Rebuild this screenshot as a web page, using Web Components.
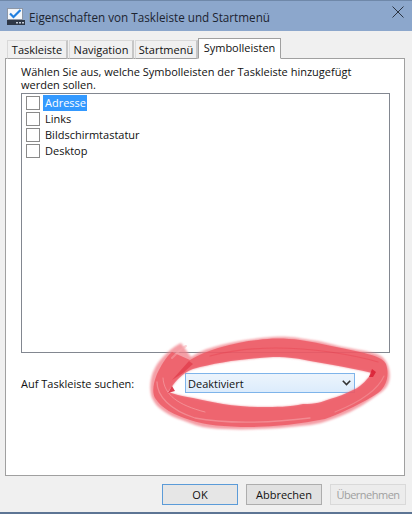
<!DOCTYPE html>
<html lang="de">
<head>
<meta charset="utf-8">
<title>Eigenschaften von Taskleiste und Startmenü</title>
<style>
  html, body { margin: 0; padding: 0; background: #f0f0f0; }
  body { font: 11px "Open Sans", "Noto Sans", sans-serif; color: #111; }
</style>
</head>
<body>
<win-dialog>
  <title-bar slot="title">Eigenschaften von Taskleiste und Startmenü</title-bar>
  <tab-strip slot="tabs">
    <tab-item style="--w:61px">Taskleiste</tab-item>
    <tab-item style="--w:65px">Navigation</tab-item>
    <tab-item style="--w:63px">Startmenü</tab-item>
    <tab-item active style="--w:83px">Symbolleisten</tab-item>
  </tab-strip>
  <tab-panel slot="panel">
    <span slot="intro">Wählen Sie aus, welche Symbolleisten der Taskleiste hinzugefügt werden sollen.</span>
    <check-list slot="list">
      <check-item selected>Adresse</check-item>
      <check-item>Links</check-item>
      <check-item>Bildschirmtastatur</check-item>
      <check-item>Desktop</check-item>
    </check-list>
    <span slot="label">Auf Taskleiste suchen:</span>
    <combo-box slot="combo">Deaktiviert</combo-box>
  </tab-panel>
  <win-button slot="buttons" focused>OK</win-button>
  <win-button slot="buttons">Abbrechen</win-button>
  <win-button slot="buttons" disabled>Übernehmen</win-button>
  <ink-ring slot="overlay"></ink-ring>
</win-dialog>

<script>
class WinDialog extends HTMLElement {
  constructor() {
    super();
    this.attachShadow({ mode: 'open' });
    this.shadowRoot.innerHTML = `
      <style>
        :host {
          display: flex;
          flex-direction: column;
          position: relative;
          width: 412px;
          height: 514px;
          box-sizing: border-box;
          background: #f0f0f0;
          border-bottom: 2px solid #5d7594;
          overflow: hidden;
        }
        .body {
          flex: 1;
          display: flex;
          flex-direction: column;
          padding: 7px 6px 0 5px;
        }
        .buttons {
          display: flex;
          justify-content: flex-end;
          gap: 8px;
          margin-top: 8px;
        }
      </style>
      <slot name="title"></slot>
      <div class="body">
        <slot name="tabs"></slot>
        <slot name="panel"></slot>
        <div class="buttons"><slot name="buttons"></slot></div>
      </div>
      <slot name="overlay"></slot>
    `;
  }
}

class TitleBar extends HTMLElement {
  constructor() {
    super();
    this.attachShadow({ mode: 'open' });
    this.shadowRoot.innerHTML = `
      <style>
        :host {
          display: flex;
          align-items: center;
          height: 31px;
          box-sizing: border-box;
          padding: 1px 8px 0 7px;
          background: #8ca7cc;
          border-top: 1px solid #6f88a9;
          color: #1c2430;
          font-size: 11.7px;
        }
        .icon { flex: none; margin-right: 4px; }
        .text { flex: 1; white-space: nowrap; }
        .close { flex: none; align-self: flex-start; margin-top: 4px; }
      </style>
      <svg class="icon" width="18" height="17" viewBox="0 0 18 17">
        <rect x="0.5" y="0.5" width="15" height="11" fill="#f4f7fb" stroke="#8d97a6"/>
        <path d="M3 5.5 L6.5 9 L13.5 2" fill="none" stroke="#1f7fe0" stroke-width="2.2"/>
        <rect x="0" y="12" width="18" height="5" fill="#2e3746"/>
        <rect x="9" y="14" width="2" height="1.5" fill="#c4cbd6"/>
        <rect x="12" y="14" width="2" height="1.5" fill="#c4cbd6"/>
        <rect x="15" y="14" width="2" height="1.5" fill="#c4cbd6"/>
      </svg>
      <span class="text"><slot></slot></span>
      <svg class="close" width="12" height="12" viewBox="0 0 12 12">
        <path d="M0.5 0.5 L11.5 11.5 M11.5 0.5 L0.5 11.5" stroke="#2b3442" stroke-width="1" fill="none"/>
      </svg>
    `;
  }
}

class TabStrip extends HTMLElement {
  constructor() {
    super();
    this.attachShadow({ mode: 'open' });
    this.shadowRoot.innerHTML = `
      <style>
        :host {
          display: flex;
          align-items: flex-end;
          height: 21px;
          padding-left: 2px;
          position: relative;
          z-index: 1;
          margin-bottom: -1px;
        }
      </style>
      <slot></slot>
    `;
  }
}

class TabItem extends HTMLElement {
  constructor() {
    super();
    this.attachShadow({ mode: 'open' });
    this.shadowRoot.innerHTML = `
      <style>
        :host {
          display: block;
          box-sizing: border-box;
          width: var(--w);
          height: 19px;
          line-height: 18px;
          text-align: center;
          margin-right: 1px;
          background: #f0f0f0;
          border: 1px solid #d9d9d9;
          border-right: 2px solid #c6c6c6;
          border-bottom: 1px solid #a0a0a0;
          white-space: nowrap;
        }
        :host([active]) {
          height: 21px;
          line-height: 17px;
          background: #fff;
          border: 1px solid #a0a0a0;
          border-bottom: 1px solid #fff;
          margin-left: -1px;
        }
      </style>
      <slot></slot>
    `;
  }
}

class TabPanel extends HTMLElement {
  constructor() {
    super();
    this.attachShadow({ mode: 'open' });
    this.shadowRoot.innerHTML = `
      <style>
        :host {
          display: block;
          height: 418px;
          width: 400px;
          box-sizing: border-box;
          background: #fff;
          border: 1px solid #a0a0a0;
          padding: 6px 15px 0;
        }
        .intro { line-height: 13px; margin-bottom: 2px; padding-right: 30px; }
        .row {
          display: flex;
          align-items: center;
          margin-top: 20px;
          height: 20px;
        }
        .label { width: 164px; flex: none; }
      </style>
      <div class="intro"><slot name="intro"></slot></div>
      <slot name="list"></slot>
      <div class="row">
        <span class="label"><slot name="label"></slot></span>
        <slot name="combo"></slot>
      </div>
    `;
  }
}

class CheckList extends HTMLElement {
  constructor() {
    super();
    this.attachShadow({ mode: 'open' });
    this.shadowRoot.innerHTML = `
      <style>
        :host {
          display: flex;
          flex-direction: column;
          box-sizing: border-box;
          width: 369px;
          height: 260px;
          border: 1px solid #828790;
          padding: 1px 0 0 4px;
          background: #fff;
        }
      </style>
      <slot></slot>
    `;
  }
}

class CheckItem extends HTMLElement {
  constructor() {
    super();
    this.attachShadow({ mode: 'open' });
    this.shadowRoot.innerHTML = `
      <style>
        :host {
          display: flex;
          align-items: center;
          height: 16px;
          gap: 3px;
        }
        .box {
          box-sizing: border-box;
          width: 14px;
          height: 14px;
          border: 1px solid #8a8a8a;
          background: #fff;
          flex: none;
        }
        .text { padding: 0 1px 0 2px; line-height: 16px; white-space: nowrap; }
        :host([selected]) .text { background: #3399ff; color: #fff; }
      </style>
      <span class="box"></span>
      <span class="text"><slot></slot></span>
    `;
  }
}

class ComboBox extends HTMLElement {
  constructor() {
    super();
    this.attachShadow({ mode: 'open' });
    this.shadowRoot.innerHTML = `
      <style>
        :host {
          display: flex;
          align-items: center;
          justify-content: space-between;
          box-sizing: border-box;
          width: 170px;
          height: 20px;
          padding: 0 3px 0 2px;
          border: 1px solid #7eb4ea;
          background: linear-gradient(#ecf4fc, #dcecfc);
        }
      </style>
      <span><slot></slot></span>
      <svg width="9" height="6" viewBox="0 0 9 6">
        <path d="M0.8 0.8 L4.5 4.5 L8.2 0.8" fill="none" stroke="#333" stroke-width="1.6"/>
      </svg>
    `;
  }
}

class WinButton extends HTMLElement {
  constructor() {
    super();
    this.attachShadow({ mode: 'open' });
    this.shadowRoot.innerHTML = `
      <style>
        :host {
          display: flex;
          align-items: center;
          justify-content: center;
          box-sizing: border-box;
          width: 76px;
          height: 21px;
          border: 1px solid #adadad;
          background: #e1e1e1;
          white-space: nowrap;
        }
        :host([focused]) { border-color: #5b9bd8; background: #e6e6e6; }
        :host([disabled]) { background: #ececec; border-color: #d9d9d9; color: #a0a0a0; letter-spacing: -0.5px; }
      </style>
      <slot></slot>
    `;
  }
}

class InkRing extends HTMLElement {
  constructor() {
    super();
    this.attachShadow({ mode: 'open' });
    const hole = `M168 392 L173 385 C178 378 185 372 193 369 C215 363 240 359 273 357 C290 357 300 359 310 361
             L333 365 C345 367 360 370 372 373 L368 378 C363 384 358 388 353 390 C345 394 338 397 330 399
             C322 402 316 404 303 404 C290 407 275 407 263 407 C250 407 236 406 223 404 C212 402 202 400 193 398
             C187 397 182 396 178 395 Z`;
    this.shadowRoot.innerHTML = `
      <style>
        :host { position: absolute; left: 0; top: 0; pointer-events: none; }
        svg { display: block; }
      </style>
      <svg width="412" height="514" viewBox="0 0 412 514">
        <defs>
          <filter id="soft" x="-5%" y="-5%" width="110%" height="110%"><feGaussianBlur stdDeviation="0.5"/></filter>
          <filter id="wide" x="-5%" y="-5%" width="110%" height="110%"><feGaussianBlur stdDeviation="1.2"/></filter>
        </defs>
        <!-- outer halo, paler than the body of the stroke -->
        <path filter="url(#wide)" fill="#f07f88" fill-opacity="0.75" fill-rule="evenodd"
          d="M181 343 C173 347 169 351 165 355 C159 361 157 364 155 368 C150 376 149 390 152 398
             C155 404 158 407 162 410 C170 416 176 418 182 420 C192 424 200 427 210 428
             C240 431 275 429 310 425 C318 424 324 422 330 420 C338 417 344 415 350 412
             C358 408 366 403 373 398 C380 393 385 390 387 386 C391 380 391 368 385 360
             C382 356 378 354 373 353 C362 350 352 349 343 347 C330 344 320 341 310 340
             C295 337 285 336 273 337 C258 338 244 340 230 343 C220 345 208 348 198 353 L191 357 Z
             ${hole}"/>
        <!-- body of the stroke -->
        <path filter="url(#soft)" fill="#ec4f5c" fill-opacity="0.72" fill-rule="evenodd"
          d="M172 352 C165 358 161 366 157 374 C153 384 152 392 155 398 C161 408 174 415 190 420
             C205 425 225 427 250 427 C275 427 300 424 325 419 C345 412 364 402 378 393
             C386 387 390 376 386 364 C382 357 372 355 360 352 C340 348 320 343 300 340
             C285 338 270 338 258 340 C245 341 232 344 218 348 C208 351 198 355 190 360 Z
             ${hole}"/>
        <!-- brush streaks -->
        <g fill="none" stroke-linecap="round">
          <path d="M157 382 C157 396 170 410 195 418 C225 424 270 423 310 418" stroke="#f7b0b5" stroke-width="1.3" opacity="0.5"/>
          <path d="M163 378 C164 395 178 405 205 412" stroke="#f9c0c4" stroke-width="1" opacity="0.45"/>
          <path d="M335 412 C355 404 377 392 384 376" stroke="#f6a0a6" stroke-width="1.2" opacity="0.5"/>
          <path d="M210 356 C240 348 280 345 330 352 C350 355 365 358 378 362" stroke="#e63a48" stroke-width="1.2" opacity="0.35"/>
          <path d="M172 358 C178 352 182 348 186 346" stroke="#f7a8ae" stroke-width="2" opacity="0.5"/>
        </g>
        <!-- spots where the stroke crosses itself -->
        <path d="M172 380 L189 361 L193 364 L183 373 Z" fill="#dc2c3c" opacity="0.55"/>
        <path d="M168 393 L172 386 L175 391 Z M369 377 L372 369 L376 372 L373 377 Z" fill="#d81f32" opacity="0.85"/>
      </svg>
    `;
  }
}

customElements.define('win-dialog', WinDialog);
customElements.define('title-bar', TitleBar);
customElements.define('tab-strip', TabStrip);
customElements.define('tab-item', TabItem);
customElements.define('tab-panel', TabPanel);
customElements.define('check-list', CheckList);
customElements.define('check-item', CheckItem);
customElements.define('combo-box', ComboBox);
customElements.define('win-button', WinButton);
customElements.define('ink-ring', InkRing);
</script>
</body>
</html>
